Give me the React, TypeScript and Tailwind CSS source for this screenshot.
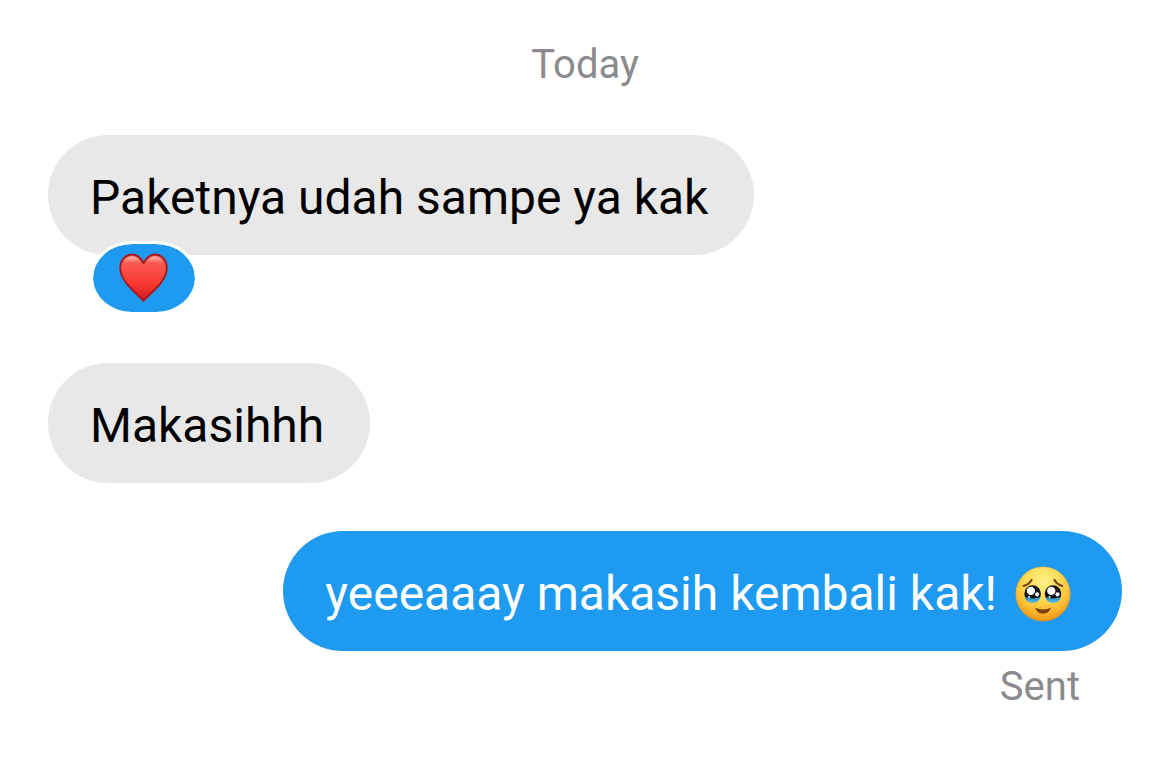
import React from 'react'
import { clsx } from 'clsx'

interface BubbleProps {
  sent?: boolean
  children: React.ReactNode
}

const HeartEmoji: React.FC = () => (
  <svg role="img" aria-label="Red heart" viewBox="0 0 50 50" className="size-[50px]">
    <defs>
      <linearGradient id="heart-fill" x1="0" y1="0" x2="0" y2="1">
        <stop offset="0" stopColor="#f9655c" />
        <stop offset="0.3" stopColor="#fb5048" />
        <stop offset="0.65" stopColor="#f8382f" />
        <stop offset="1" stopColor="#c9161b" />
      </linearGradient>
      <linearGradient id="heart-shine" x1="0" y1="0" x2="0" y2="1">
        <stop offset="0" stopColor="#ffd5cf" stopOpacity="0.85" />
        <stop offset="1" stopColor="#ff7a70" stopOpacity="0" />
      </linearGradient>
    </defs>
    <path
      d="M24.500 10.500C22 5 18 1.500 13 1.500C6 1.500 1.200 7.300 1.200 15C1.200 27.500 14.500 37.500 24.500 48C34.500 37.500 47.800 27.500 47.800 15C47.800 7.300 43 1.500 36 1.500C31 1.500 27 5 24.500 10.500Z"
      fill="url(#heart-fill)"
      stroke="#a5191e"
      strokeWidth="1.800"
      strokeLinejoin="round"
    />
    <path d="M4 12C5.500 6.500 8.500 3.500 13 3.500C17 3.500 20 6 21.500 10C17 8 9 8 4 12Z" fill="url(#heart-shine)" />
    <path d="M45 12C43.500 6.500 40.500 3.500 36 3.500C32 3.500 29 6 27.500 10C32 8 40 8 45 12Z" fill="url(#heart-shine)" />
  </svg>
)

const TearyFaceEmoji: React.FC = () => (
  <svg role="img" aria-label="Face holding back tears" viewBox="0 0 162 162" className="size-14">
    <defs>
      <radialGradient id="face-fill" cx="0.5" cy="0.28" r="0.76">
        <stop offset="0" stopColor="#fff08a" />
        <stop offset="0.4" stopColor="#ffdd58" />
        <stop offset="0.75" stopColor="#fdb52b" />
        <stop offset="1" stopColor="#ea8715" />
      </radialGradient>
      <linearGradient id="tear-fill" x1="0" y1="0" x2="0" y2="1">
        <stop offset="0" stopColor="#2580b8" />
        <stop offset="1" stopColor="#5cc3ee" />
      </linearGradient>
    </defs>
    <circle cx="81" cy="81" r="79" fill="url(#face-fill)" stroke="#d98a2b" strokeWidth="1" />
    <path d="M25 58Q41 54 48 40" fill="none" stroke="#7b4312" strokeWidth="6" strokeLinecap="round" />
    <path d="M137 58Q121 54 114 40" fill="none" stroke="#7b4312" strokeWidth="6" strokeLinecap="round" />
    {[51, 110].map((cx) => (
      <g key={cx}>
        <circle cx={cx} cy="80" r="24" fill="#141213" />
        <path d={`M${cx - 23} 89Q${cx} 99 ${cx + 23} 89Q${cx + 18} 107 ${cx} 107Q${cx - 18} 107 ${cx - 23} 89Z`} fill="url(#tear-fill)" />
        <circle cx={cx - 5} cy="72" r="12" fill="#fff" />
        <circle cx={cx + 13} cy="82" r="6" fill="#fff" />
        <circle cx={cx - 10} cy="90" r="3" fill="#d8f2ff" />
      </g>
    ))}
    <path d="M58 121Q81 130 104 121Q98 138 81 138Q64 138 58 121Z" fill="#7b4312" />
  </svg>
)

const Bubble: React.FC<BubbleProps> = ({ sent = false, children }) => (
  <p
    className={clsx(
      'w-fit rounded-full pt-[33px] pr-[46px] pb-[27px] pl-[42px] text-[48px] leading-[60px]',
      sent ? 'bg-[#1e9bf0] text-white' : 'bg-[#e8e8e8] text-black'
    )}
  >
    {children}
  </p>
)

const Reaction: React.FC<{ children: React.ReactNode }> = ({ children }) => (
  <button
    type="button"
    className="relative -mt-[14px] ml-[42px] flex rounded-[42px/37px] border-3 border-white bg-[#1e9bf0] bg-clip-padding px-[26px] py-[9px]"
  >
    {children}
  </button>
)

export default function App() {
  return (
    <main className="min-h-screen bg-white px-12 py-[41px] font-['Roboto',sans-serif]">
      <h1 className="text-center text-[40px] leading-12 font-normal text-[#8b8b8d]">Today</h1>
      <ul className="mt-[46px] flex flex-col gap-12">
        <li>
          <Bubble>Paketnya udah sampe ya kak</Bubble>
          <Reaction>
            <HeartEmoji />
          </Reaction>
        </li>
        <li>
          <Bubble>Makasihhh</Bubble>
        </li>
        <li className="flex flex-col items-end">
          <Bubble sent>
            <span className="flex items-center gap-[18px] pr-[5px]">
              yeeeaaay makasih kembali kak!
              <TearyFaceEmoji />
            </span>
          </Bubble>
          <span className="mt-3 pr-[42px] text-[40px] leading-12 text-[#8b8b8d]">Sent</span>
        </li>
      </ul>
    </main>
  )
}
